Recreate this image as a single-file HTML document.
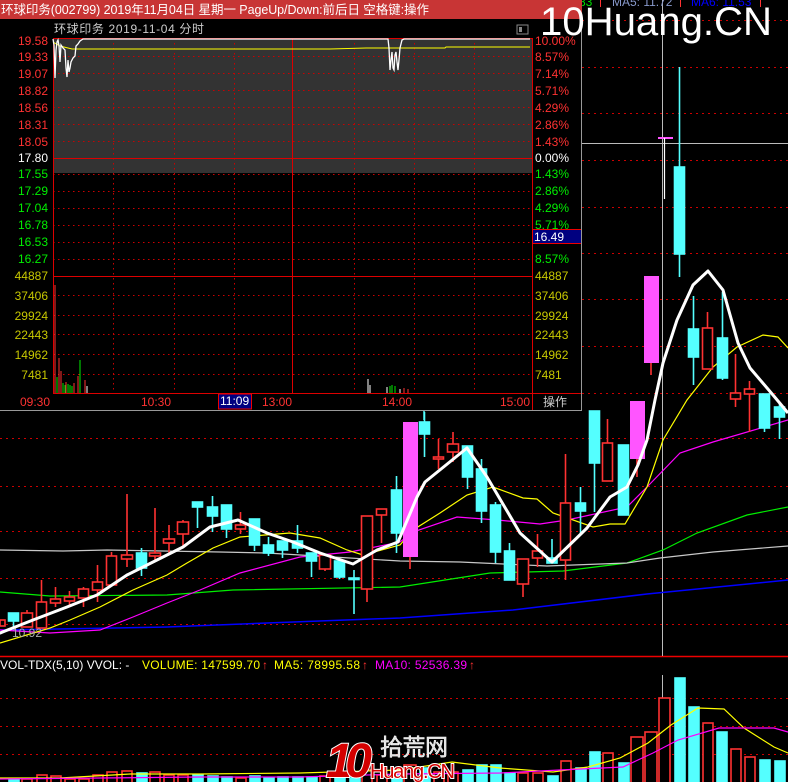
<!DOCTYPE html>
<html><head><meta charset="utf-8"><style>
html,body{margin:0;padding:0;background:#000;width:788px;height:782px;overflow:hidden}
svg{display:block}
text{font-family:"Liberation Sans","Noto Sans CJK SC",sans-serif}
</style></head><body>
<svg width="788" height="782" viewBox="0 0 788 782" xmlns="http://www.w3.org/2000/svg">
<rect width="788" height="782" fill="#000"/>
<!-- main grid -->
<g stroke="#c00" stroke-width="1" stroke-dasharray="2,4">
<line x1="0" y1="20.5" x2="788" y2="20.5"/><line x1="0" y1="67.5" x2="788" y2="67.5"/><line x1="0" y1="113.5" x2="788" y2="113.5"/><line x1="0" y1="160.5" x2="788" y2="160.5"/><line x1="0" y1="207.5" x2="788" y2="207.5"/><line x1="0" y1="253.5" x2="788" y2="253.5"/><line x1="0" y1="299.5" x2="788" y2="299.5"/><line x1="0" y1="346.5" x2="788" y2="346.5"/><line x1="0" y1="393.5" x2="788" y2="393.5"/><line x1="0" y1="438.5" x2="788" y2="438.5"/><line x1="0" y1="486.5" x2="788" y2="486.5"/><line x1="0" y1="531.5" x2="788" y2="531.5"/><line x1="0" y1="578.5" x2="788" y2="578.5"/><line x1="0" y1="624.5" x2="788" y2="624.5"/>
<line x1="0" y1="698.5" x2="788" y2="698.5"/><line x1="0" y1="726.5" x2="788" y2="726.5"/><line x1="0" y1="754.5" x2="788" y2="754.5"/>
</g>
<line x1="0" y1="656.5" x2="788" y2="656.5" stroke="#e00" stroke-width="1.5"/>
<!-- crosshair -->
<line x1="662.5" y1="0" x2="662.5" y2="656" stroke="#bbb" stroke-width="1"/>
<line x1="582" y1="143.5" x2="788" y2="143.5" stroke="#bbb" stroke-width="1"/>
<line x1="662.5" y1="675" x2="662.5" y2="782" stroke="#bbb" stroke-width="1"/>
<!-- MA lines -->
<g fill="none">
<polyline stroke="#0000ff" stroke-width="1.5" points="0,630 167,627 267,623 400,618 513,610 647,594 788,580"/>
<polyline stroke="#00ee00" stroke-width="1.2" points="0,592 50,596 167,595 233,590 400,587 490,573 563,571 627,563 663,550 697,533 747,515 788,507"/>
<polyline stroke="#c8c8c8" stroke-width="1.2" points="0,550 63,551 107,550 220,552 267,553 333,557 400,561 460,562 547,566 627,563 660,558 713,552 788,546"/>
<polyline stroke="#ff00ff" stroke-width="1.2" points="0,630 50,633 100,630 133,617 167,603 200,590 240,573 300,557 350,552 400,542 413,532 457,517 497,520 540,524 567,520 627,507 647,487 680,453 713,442 788,420"/>
<polyline stroke="#ffff00" stroke-width="1.2" points="0,643 50,628 70,620 100,607 133,590 167,575 187,563 213,548 240,537 290,533 320,538 347,550 363,555 400,545 413,530 440,513 467,495 493,487 523,498 537,499 553,513 593,527 610,524 625,524 647,487 663,440 687,400 713,367 737,347 763,335 778,337 788,348"/>
</g>
<!-- candles -->
<g stroke-width="1.6">
<g stroke="#ff3232" fill="#000">
<line x1="2.5" y1="620" x2="2.5" y2="626"/><rect x="0" y="620" width="5" height="6"/>
<line x1="27" y1="610" x2="27" y2="627"/><rect x="21.5" y="613" width="11" height="14"/>
<line x1="41.5" y1="580" x2="41.5" y2="628"/><rect x="36.5" y="602" width="10" height="26"/>
<line x1="55.5" y1="587" x2="55.5" y2="607"/><rect x="50.5" y="599" width="10" height="4"/>
<line x1="69.5" y1="591" x2="69.5" y2="605"/><rect x="64.5" y="597" width="10" height="4"/>
<line x1="83.5" y1="587" x2="83.5" y2="607"/><rect x="78.5" y="589" width="10" height="9"/>
<line x1="97.5" y1="565" x2="97.5" y2="602"/><rect x="92.5" y="582" width="10" height="8"/>
<line x1="111.5" y1="552" x2="111.5" y2="585"/><rect x="106.5" y="556" width="10" height="29"/>
<line x1="127" y1="494" x2="127" y2="567"/><rect x="121.5" y="555" width="11" height="4"/>
<line x1="155" y1="508" x2="155" y2="562"/><rect x="149.5" y="553" width="11" height="3"/>
<line x1="169" y1="525" x2="169" y2="553"/><rect x="163.5" y="539" width="11" height="4"/>
<line x1="183" y1="520" x2="183" y2="547"/><rect x="177.5" y="522" width="11" height="12"/>
<line x1="240.5" y1="512" x2="240.5" y2="534"/><rect x="235.5" y="525" width="10" height="4"/>
<line x1="325" y1="555" x2="325" y2="571"/><rect x="319.5" y="555" width="11" height="14"/>
<line x1="367" y1="516" x2="367" y2="602"/><rect x="361.5" y="516" width="11" height="73"/>
<line x1="381.5" y1="509" x2="381.5" y2="543"/><rect x="376.5" y="509" width="10" height="6"/>
<line x1="438.5" y1="439" x2="438.5" y2="469"/><rect x="433.5" y="457" width="10" height="2"/>
<line x1="453" y1="432" x2="453" y2="462"/><rect x="447.5" y="444" width="11" height="8"/>
<line x1="523" y1="559" x2="523" y2="597"/><rect x="517.5" y="559" width="11" height="25"/>
<line x1="537.5" y1="534" x2="537.5" y2="567"/><rect x="532.5" y="551" width="10" height="7"/>
<line x1="565.5" y1="454" x2="565.5" y2="580"/><rect x="560.5" y="503" width="10" height="57"/>
<line x1="607.5" y1="419" x2="607.5" y2="481"/><rect x="602.5" y="443" width="10" height="38"/>
<line x1="707.5" y1="312" x2="707.5" y2="369"/><rect x="702.5" y="328" width="10" height="41"/>
<line x1="735.5" y1="354" x2="735.5" y2="407"/><rect x="730.5" y="393" width="10" height="6"/>
<line x1="749.5" y1="381" x2="749.5" y2="432"/><rect x="744.5" y="389" width="10" height="5"/>
</g>
<g stroke="#54ffff" fill="#54ffff">
<line x1="13.5" y1="613" x2="13.5" y2="627"/><rect x="8.5" y="613" width="10" height="8"/>
<line x1="141.5" y1="548" x2="141.5" y2="576"/><rect x="136.5" y="553" width="10" height="15"/>
<line x1="197.5" y1="502" x2="197.5" y2="528"/><rect x="192.5" y="502" width="10" height="5"/>
<line x1="212.5" y1="496" x2="212.5" y2="532"/><rect x="207.5" y="507" width="10" height="9"/>
<line x1="226.5" y1="505" x2="226.5" y2="538"/><rect x="221.5" y="505" width="10" height="24"/>
<line x1="254.5" y1="519" x2="254.5" y2="551"/><rect x="249.5" y="519" width="10" height="26"/>
<line x1="268.5" y1="537" x2="268.5" y2="556"/><rect x="263.5" y="545" width="10" height="8"/>
<line x1="282.5" y1="541" x2="282.5" y2="558"/><rect x="277.5" y="541" width="10" height="9"/>
<line x1="297.5" y1="525" x2="297.5" y2="553"/><rect x="292.5" y="541" width="10" height="7"/>
<line x1="311.5" y1="553" x2="311.5" y2="577"/><rect x="306.5" y="553" width="10" height="8"/>
<line x1="339.5" y1="561" x2="339.5" y2="579"/><rect x="334.5" y="561" width="10" height="16"/>
<line x1="354" y1="570" x2="354" y2="614"/><rect x="349" y="578" width="10" height="1.5"/>
<line x1="396.5" y1="476" x2="396.5" y2="553"/><rect x="391.5" y="490" width="10" height="43"/>
<line x1="424.5" y1="412" x2="424.5" y2="457"/><rect x="419.5" y="422" width="10" height="12"/>
<line x1="467.5" y1="446" x2="467.5" y2="489"/><rect x="462.5" y="446" width="10" height="31"/>
<line x1="481.5" y1="459" x2="481.5" y2="523"/><rect x="476.5" y="469" width="10" height="42"/>
<line x1="495.5" y1="502" x2="495.5" y2="563"/><rect x="490.5" y="505" width="10" height="47"/>
<line x1="509.5" y1="543" x2="509.5" y2="580"/><rect x="504.5" y="551" width="10" height="29"/>
<line x1="552" y1="539" x2="552" y2="563"/><rect x="547" y="558" width="10" height="5"/>
<line x1="580.5" y1="487" x2="580.5" y2="533"/><rect x="575.5" y="503" width="10" height="8"/>
<line x1="594.5" y1="411" x2="594.5" y2="512"/><rect x="589.5" y="411" width="10" height="52"/>
<line x1="623.5" y1="445" x2="623.5" y2="515"/><rect x="618.5" y="445" width="10" height="70"/>
<line x1="679.5" y1="67" x2="679.5" y2="277"/><rect x="674.5" y="167" width="10" height="87"/>
<line x1="693.5" y1="296" x2="693.5" y2="385"/><rect x="688.5" y="329" width="10" height="28"/>
<line x1="722.5" y1="292" x2="722.5" y2="380"/><rect x="717.5" y="338" width="10" height="40"/>
<line x1="764.5" y1="394" x2="764.5" y2="432"/><rect x="759.5" y="394" width="10" height="34"/>
<line x1="779.5" y1="403" x2="779.5" y2="439"/><rect x="774.5" y="407" width="10" height="10"/>
</g>
<g stroke="#ff3232" stroke-width="1.6"><line x1="410" y1="557" x2="410" y2="569"/><line x1="637" y1="459" x2="637" y2="477"/><line x1="651" y1="363" x2="651" y2="375"/></g>
<g fill="#ff55ff" stroke="none">
<rect x="403" y="422" width="15" height="135"/>
<rect x="630" y="401" width="15" height="58"/>
<rect x="644" y="276" width="15" height="87"/>
<rect x="658" y="137" width="15" height="2"/>
</g>
<line x1="664.5" y1="138" x2="664.5" y2="199" stroke="#fff" stroke-width="1.2"/>
</g>
<!-- MA5 thick white -->
<polyline fill="none" stroke="#fff" stroke-width="3" stroke-linejoin="round" points="0,633 33,620 67,607 97,595 127,575 157,560 183,547 210,527 238,520 267,533 293,542 320,553 353,564 377,550 398,542 417,497 425,482 467,448 487,477 520,533 552,562 587,528 610,497 627,487 638,465 647,440 655,400 663,363 677,320 693,285 708,271 723,290 738,343 750,368 773,395 788,413"/>
<text x="12" y="637" fill="#aaa" font-size="12">10.92</text>
<path d="M0 634 L8 630" stroke="#fff" stroke-width="1.5"/>
<!-- volume header -->
<text x="0" y="669" font-size="12" fill="#fff">VOL-TDX(5,10)  VVOL: -</text>
<text x="142" y="669" font-size="12" fill="#ffff00" textLength="118">VOLUME: 147599.70</text>
<text x="262" y="669" font-size="12" fill="#ff3232">↑</text>
<text x="274" y="669" font-size="12" fill="#ffff00" textLength="86">MA5: 78995.58</text>
<text x="362" y="669" font-size="12" fill="#ff3232">↑</text>
<text x="375" y="669" font-size="12" fill="#ff00ff" textLength="92">MA10: 52536.39</text>
<text x="469" y="669" font-size="12" fill="#ff3232">↑</text>
<!-- volume bars -->
<g stroke-width="1.6">
<g fill="#000" stroke="#ff3232">
<rect x="22" y="779" width="10" height="4"/><rect x="37" y="775" width="10" height="8"/><rect x="51" y="776" width="10" height="7"/><rect x="65" y="779" width="10" height="4"/><rect x="79" y="779" width="10" height="4"/><rect x="93" y="775" width="10" height="8"/><rect x="107" y="772" width="10" height="11"/><rect x="122" y="771" width="10" height="12"/><rect x="150" y="772" width="10" height="11"/><rect x="164" y="775" width="10" height="8"/><rect x="178" y="775" width="10" height="8"/><rect x="236" y="778" width="10" height="5"/><rect x="320" y="776" width="10" height="7"/><rect x="362" y="770" width="10" height="13"/><rect x="377" y="775" width="10" height="8"/><rect x="404" y="765" width="12" height="18"/><rect x="434" y="772" width="10" height="11"/><rect x="448" y="772" width="10" height="11"/><rect x="518" y="773" width="10" height="10"/><rect x="533" y="773" width="10" height="10"/><rect x="561" y="761" width="10" height="22"/><rect x="603" y="753" width="10" height="30"/><rect x="631" y="737" width="12" height="46"/><rect x="645" y="732" width="12" height="51"/><rect x="659" y="698" width="11" height="85"/><rect x="703" y="723" width="10" height="60"/><rect x="731" y="749" width="10" height="34"/><rect x="745" y="757" width="10" height="26"/>
</g>
<g fill="#54ffff" stroke="#54ffff">
<rect x="9" y="779" width="10" height="4"/><rect x="137" y="773" width="10" height="10"/><rect x="193" y="775" width="10" height="8"/><rect x="208" y="776" width="10" height="7"/><rect x="222" y="777" width="10" height="6"/><rect x="250" y="776" width="10" height="7"/><rect x="264" y="778" width="10" height="5"/><rect x="278" y="777" width="10" height="6"/><rect x="293" y="777" width="10" height="6"/><rect x="307" y="777" width="10" height="6"/><rect x="335" y="777" width="10" height="6"/><rect x="350" y="778" width="10" height="5"/><rect x="392" y="770" width="10" height="13"/><rect x="420" y="768" width="10" height="15"/><rect x="463" y="770" width="10" height="13"/><rect x="477" y="765" width="10" height="18"/><rect x="491" y="765" width="10" height="18"/><rect x="505" y="773" width="10" height="10"/><rect x="548" y="776" width="10" height="7"/><rect x="576" y="768" width="10" height="15"/><rect x="590" y="752" width="10" height="31"/><rect x="619" y="763" width="10" height="20"/><rect x="675" y="678" width="10" height="105"/><rect x="689" y="707" width="10" height="76"/><rect x="717" y="732" width="10" height="51"/><rect x="760" y="760" width="10" height="23"/><rect x="775" y="761" width="10" height="22"/>
</g>
</g>
<polyline fill="none" stroke="#ffff00" stroke-width="1.2" points="0,778 60,778 130,774 200,774 300,773 400,770 452,762 500,768 553,772 588,767 620,758 648,743 671,725 698,708 724,709 744,728 774,747 788,753"/>
<polyline fill="none" stroke="#ff00ff" stroke-width="1.2" points="0,779 100,778 200,777 300,777 400,774 500,773 560,770 623,767 653,753 678,740 719,728 774,728 788,732"/>
<!-- logo watermark -->
<g>
<text x="326" y="777" font-size="48" font-weight="bold" font-style="italic" fill="#d40000" stroke="#fff" stroke-width="2" paint-order="stroke" textLength="46" font-family="Liberation Sans,sans-serif">10</text>
<text x="380" y="755" font-size="23" fill="#ddd" stroke="#fff" stroke-width="0.5" textLength="68" font-family="Liberation Sans,Noto Sans CJK SC,sans-serif">拾荒网</text>
<text x="370" y="778" font-size="20" fill="#d40000" stroke="#fff" stroke-width="2" paint-order="stroke" textLength="85">Huang.CN</text>
</g>
<!-- top labels behind watermark -->
<text x="579" y="6" font-size="12" fill="#00dd00">83</text>
<line x1="600.5" y1="0" x2="600.5" y2="7" stroke="#ff3232"/>
<text x="612" y="6" font-size="12" fill="#8899cc">MA5: 11.72</text>
<line x1="680.5" y1="0" x2="680.5" y2="7" stroke="#ff3232"/>
<text x="691" y="6" font-size="12" fill="#0000ff">MA6: 11.53</text>
<line x1="760.5" y1="0" x2="760.5" y2="7" stroke="#ff3232"/>

<!-- POPUP -->
<rect x="0" y="0" width="582" height="411" fill="#000"/>
<rect x="0" y="0" width="582" height="19" fill="#c83535"/>
<text x="1" y="14" font-size="12.5" fill="#fff" textLength="428">环球印务(002799) 2019年11月04日 星期一 PageUp/Down:前后日 空格键:操作</text>
<text x="54" y="33" font-size="12" fill="#ccc" textLength="150">环球印务  2019-11-04 分时</text>
<rect x="517" y="25" width="11" height="9" fill="none" stroke="#888"/><rect x="519" y="27" width="3" height="5" fill="#888"/>
<rect x="53" y="38" width="479" height="135" fill="#333"/>
<g stroke="#c00" stroke-dasharray="1.5,3.5" stroke-width="1">
<line x1="53" y1="56.5" x2="532" y2="56.5"/><line x1="53" y1="73.5" x2="532" y2="73.5"/><line x1="53" y1="90.5" x2="532" y2="90.5"/><line x1="53" y1="107.5" x2="532" y2="107.5"/><line x1="53" y1="124.5" x2="532" y2="124.5"/><line x1="53" y1="141.5" x2="532" y2="141.5"/><line x1="53" y1="174.5" x2="532" y2="174.5"/><line x1="53" y1="191.5" x2="532" y2="191.5"/><line x1="53" y1="208.5" x2="532" y2="208.5"/><line x1="53" y1="225.5" x2="532" y2="225.5"/><line x1="53" y1="242.5" x2="532" y2="242.5"/><line x1="53" y1="259.5" x2="532" y2="259.5"/>
<line x1="53" y1="295.5" x2="532" y2="295.5"/><line x1="53" y1="315.5" x2="532" y2="315.5"/><line x1="53" y1="334.5" x2="532" y2="334.5"/><line x1="53" y1="354.5" x2="532" y2="354.5"/><line x1="53" y1="374.5" x2="532" y2="374.5"/>
<line x1="113.5" y1="38" x2="113.5" y2="393"/><line x1="174.5" y1="38" x2="174.5" y2="393"/><line x1="234.5" y1="38" x2="234.5" y2="393"/><line x1="354.5" y1="38" x2="354.5" y2="393"/><line x1="414.5" y1="38" x2="414.5" y2="393"/><line x1="474.5" y1="38" x2="474.5" y2="393"/>
</g>
<g stroke="#d00" stroke-width="1">
<line x1="53" y1="158.5" x2="532" y2="158.5"/><line x1="53" y1="276.5" x2="532" y2="276.5"/>
<line x1="292.5" y1="38" x2="292.5" y2="393"/>
<line x1="53" y1="393.5" x2="582" y2="393.5"/>
<line x1="532.5" y1="38" x2="532.5" y2="411"/>
<line x1="53.5" y1="38" x2="53.5" y2="393"/>
<line x1="53" y1="38.5" x2="532" y2="38.5"/>
</g>
<polyline fill="none" stroke="#ffff00" stroke-width="1" points="53,42 60,46 72,49 330,49 366,48 445,48 446,47 530,47"/>
<polyline fill="none" stroke="#fff" stroke-width="1.3" points="53,39 54,45 55,78 56,50 57,42 58,40 59,46 60,62 61,45 63,48 65,50 66,68 67,77 68,60 69,72 70,68 71,62 73,58 75,56 76,46 78,44 80,41 83,39 388,39 389,48 390,70 391,60 392,52 393,68 394,70 395,55 396,52 397,62 398,70 399,60 400,48 402,40 404,39 530,39"/>
<g stroke-width="1">
<g stroke="#ff3232"><line x1="55" y1="285" x2="55" y2="393"/><line x1="59" y1="358" x2="59" y2="393"/><line x1="61" y1="371" x2="61" y2="393"/><line x1="66" y1="382" x2="66" y2="393"/><line x1="74" y1="383" x2="74" y2="393"/><line x1="78" y1="376" x2="78" y2="393"/><line x1="85" y1="380" x2="85" y2="393"/><line x1="408" y1="389" x2="408" y2="393"/><line x1="404" y1="388" x2="404" y2="393"/></g>
<g stroke="#00ee00"><line x1="57" y1="377" x2="57" y2="393"/><line x1="63" y1="383" x2="63" y2="393"/><line x1="65" y1="385" x2="65" y2="393"/><line x1="68" y1="384" x2="68" y2="393"/><line x1="70" y1="385" x2="70" y2="393"/><line x1="72" y1="386" x2="72" y2="393"/><line x1="80" y1="360" x2="80" y2="393"/><line x1="390" y1="386" x2="390" y2="393"/><line x1="392" y1="385" x2="392" y2="393"/><line x1="395" y1="386" x2="395" y2="393"/></g>
<g stroke="#fff"><line x1="87" y1="386" x2="87" y2="393"/><line x1="368" y1="379" x2="368" y2="393"/><line x1="370" y1="385" x2="370" y2="393"/><line x1="387" y1="387" x2="387" y2="393"/><line x1="400" y1="389" x2="400" y2="393"/></g>
</g>
<g font-size="12" text-anchor="end">
<g fill="#ff3232"><text x="48" y="45">19.58</text><text x="48" y="61">19.33</text><text x="48" y="78">19.07</text><text x="48" y="95">18.82</text><text x="48" y="112">18.56</text><text x="48" y="129">18.31</text><text x="48" y="146">18.05</text></g>
<text x="48" y="162" fill="#fff">17.80</text>
<g fill="#00ee00"><text x="48" y="178">17.55</text><text x="48" y="195">17.29</text><text x="48" y="212">17.04</text><text x="48" y="229">16.78</text><text x="48" y="246">16.53</text><text x="48" y="263">16.27</text></g>
<g fill="#c8c800"><text x="48" y="280">44887</text><text x="48" y="300">37406</text><text x="48" y="320">29924</text><text x="48" y="339">22443</text><text x="48" y="359">14962</text><text x="48" y="379">7481</text></g>
</g>
<g font-size="12">
<g fill="#ff3232"><text x="535" y="45">10.00%</text><text x="535" y="61">8.57%</text><text x="535" y="78">7.14%</text><text x="535" y="95">5.71%</text><text x="535" y="112">4.29%</text><text x="535" y="129">2.86%</text><text x="535" y="146">1.43%</text></g>
<text x="535" y="162" fill="#fff">0.00%</text>
<g fill="#00ee00"><text x="535" y="178">1.43%</text><text x="535" y="195">2.86%</text><text x="535" y="212">4.29%</text><text x="535" y="229">5.71%</text><text x="535" y="263">8.57%</text></g>
<g fill="#c8c800"><text x="535" y="280">44887</text><text x="535" y="300">37406</text><text x="535" y="320">29924</text><text x="535" y="339">22443</text><text x="535" y="359">14962</text><text x="535" y="379">7481</text></g>
</g>
<rect x="532.5" y="229.5" width="49" height="14" fill="#000080" stroke="#e00"/>
<text x="534" y="241" font-size="12" fill="#fff">16.49</text>
<g font-size="12" fill="#ff3232">
<text x="20" y="406">09:30</text><text x="141" y="406">10:30</text><text x="262" y="406">13:00</text><text x="382" y="406">14:00</text><text x="500" y="406">15:00</text>
</g>
<rect x="218.5" y="394" width="33" height="15" fill="#000080" stroke="#e00"/>
<text x="220" y="405" font-size="12" fill="#fff">11:09</text>
<text x="543" y="406" font-size="12" fill="#ccc">操作</text>
<line x1="0" y1="410.5" x2="582" y2="410.5" stroke="#999"/>
<line x1="581.5" y1="19" x2="581.5" y2="411" stroke="#999"/>
<line x1="424" y1="411" x2="424" y2="420" stroke="#54ffff" stroke-width="1.5"/>

<!-- big watermark -->
<text x="540" y="35" font-size="40" fill="#fff" textLength="232" lengthAdjust="spacingAndGlyphs">10Huang.CN</text>
</svg>
</body></html>
